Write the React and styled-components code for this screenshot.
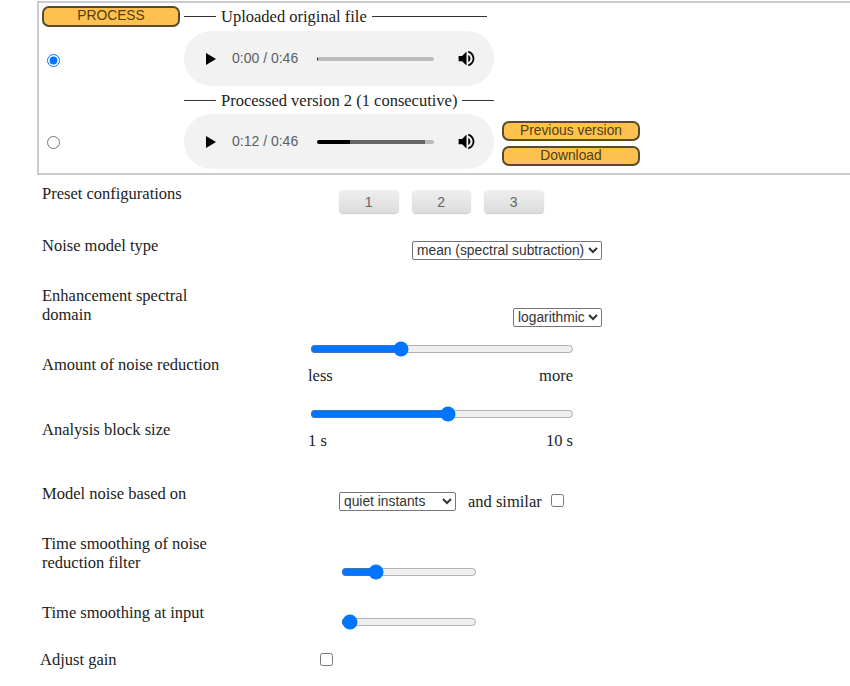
import React from 'react';
import styled, { createGlobalStyle } from 'styled-components';

const Global = createGlobalStyle`
    html, body {
        margin: 0;
        padding: 0;
        background: #fff;
        overflow: hidden;
    }
    body {
        font-family: "Liberation Serif", "Times New Roman", serif;
        font-size: 16.5px;
        line-height: 19px;
        color: #222;
    }
`;

const Page = styled.div`
    width: 850px;
    height: 686px;
    padding-top: 1px;
    box-sizing: border-box;
    overflow: hidden;
`;

const Panel = styled.div`
    width: 830px;
    height: 174px;
    margin-left: 37px;
    border: 2px solid #ccc;
    box-sizing: border-box;
    padding-top: 3px;
`;

const TrackGrid = styled.div`
    display: grid;
    grid-template-columns: 145px 310px 1fr;
    grid-template-rows: 21px 4px 55px 14px 14px 55px;
`;

const OrangeButton = styled.button`
    display: block;
    box-sizing: border-box;
    padding: 0 0 2px;
    width: ${(p) => p.$width}px;
    height: ${(p) => p.$height}px;
    background: #fec14f;
    border: 2px solid #594a2b;
    border-radius: 7px;
    font-family: "Liberation Sans", Arial, sans-serif;
    font-size: 13.8px;
    line-height: 16px;
    color: #4f3f14;
`;

const ProcessCell = styled.div`
    grid-column: 1;
    grid-row: 1;
    padding-left: 3px;
`;

const Legend = styled.div`
    grid-column: 2 / 4;
    grid-row: ${(p) => p.$row};
    display: flex;
    align-items: center;
    gap: 5px;
    height: 19px;
    white-space: nowrap;
    margin-top: ${(p) => p.$top}px;
    &::before {
        content: "";
        width: 32px;
        height: 1px;
        background: #333;
    }
    &::after {
        content: "";
        width: ${(p) => p.$tail}px;
        height: 1px;
        background: #333;
    }
`;

const RadioCell = styled.div`
    grid-column: 1;
    grid-row: ${(p) => p.$row};
    display: flex;
    align-items: center;
    padding-left: 8px;
    padding-top: ${(p) => p.$top}px;
`;

const Radio = styled.input`
    margin: 0;
    width: 13px;
    height: 13px;
    accent-color: #0075ff;
`;

const Player = styled.div`
    grid-column: 2;
    grid-row: ${(p) => p.$row};
    display: flex;
    align-items: center;
    height: 55px;
    background: #f2f2f2;
    border-radius: 28px;
    font-family: "Liberation Sans", Arial, sans-serif;
    font-size: 14px;
    color: #5d5e5f;
`;

const PlayIcon = styled.svg`
    width: 10px;
    height: 12px;
    margin-left: 22px;
    margin-right: 16px;
    flex: none;
`;

const Time = styled.span`
    width: 69px;
    flex: none;
    white-space: nowrap;
`;

const Track = styled.div`
    width: 117px;
    height: 4px;
    margin-left: 16px;
    margin-right: 22px;
    border-radius: 2px;
    flex: none;
    background: linear-gradient(
        to right,
        #000 0,
        #000 ${(p) => p.$played}px,
        ${(p) => (p.$buffered ? '#666' : '#bbb')} ${(p) => p.$played}px,
        ${(p) => (p.$buffered ? '#666' : '#bbb')} ${(p) => p.$buffered}px,
        #bbb ${(p) => p.$buffered}px,
        #bbb 100%
    );
`;

const VolumeIcon = styled.svg`
    width: 21px;
    height: 21px;
    flex: none;
`;

const SideButtons = styled.div`
    grid-column: 3;
    grid-row: 6;
    display: flex;
    flex-direction: column;
    gap: 5px;
    padding-left: 8px;
    padding-top: 7px;
`;

const Form = styled.div`
    padding-top: 9px;
`;

const Row = styled.div`
    display: grid;
    grid-template-columns: ${(p) => 266 - (p.$indent || 0)}px 1fr;
    height: ${(p) => p.$height}px;
    margin-left: ${(p) => 42 + (p.$indent || 0)}px;
`;

const Label = styled.div`
    max-width: 185px;
    padding-top: ${(p) => p.$top || 0}px;
`;

const Control = styled.div`
    display: flex;
    align-items: ${(p) => p.$align || 'flex-start'};
    flex-direction: ${(p) => p.$direction || 'row'};
    padding-left: ${(p) => p.$left || 0}px;
    padding-top: ${(p) => p.$top || 0}px;
`;

const PresetButtons = styled.div`
    display: flex;
    gap: 13px;
`;

const PresetButton = styled.button`
    width: 59.5px;
    height: 23px;
    padding: 0;
    border: 0;
    border-radius: 4px;
    background: linear-gradient(#efefef, #dcdcdc);
    box-shadow: 0 1px 1px #ccc;
    font-family: "Liberation Sans", Arial, sans-serif;
    font-size: 14px;
    color: #666;
`;

const Select = styled.select`
    box-sizing: border-box;
    height: 19px;
    padding: 0;
    width: ${(p) => (p.$width ? `${p.$width}px` : 'auto')};
    background: #fff;
    border: 1px solid #767676;
    border-radius: 2px;
    font-family: "Liberation Sans", Arial, sans-serif;
    font-size: 13.8px;
    color: #333;
`;

const Range = styled.input`
    display: block;
    width: ${(p) => p.$width}px;
    height: 16px;
    margin: 0 0 0 2px;
    accent-color: #0075ff;
`;

const ScaleLabels = styled.div`
    display: flex;
    justify-content: space-between;
    width: 265px;
    margin-top: 9px;
`;

const Inline = styled.span`
    margin-left: 12px;
    margin-right: 9px;
    line-height: 19px;
`;

const Check = styled.input`
    margin: ${(p) => p.$top || 0}px 0 0 0;
    width: 13px;
    height: 13px;
`;

const TrackPlayer = ({ row, time, played, buffered }) => (
    <Player $row={row}>
        <PlayIcon viewBox="0 0 10 12">
            <path d="M0 0 L10 6 L0 12 Z" fill="#000" />
        </PlayIcon>
        <Time>{time}</Time>
        <Track $played={played} $buffered={buffered} />
        <VolumeIcon viewBox="0 0 24 24">
            <path
                fill="#000"
                d="M3 9v6h4l5 5V4L7 9H3zm13.5 3c0-1.77-1.02-3.29-2.5-4.03v8.05c1.48-.73 2.5-2.25 2.5-4.02zM14 3.23v2.06c2.89.86 5 3.54 5 6.71s-2.11 5.85-5 6.71v2.06c4.01-.91 7-4.49 7-8.77s-2.99-7.86-7-8.77z"
            />
        </VolumeIcon>
    </Player>
);

const App = () => (
    <Page>
        <Global />
        <Panel>
            <TrackGrid>
                <ProcessCell>
                    <OrangeButton $width={138} $height={21}>PROCESS</OrangeButton>
                </ProcessCell>
                <Legend $row="1" $top={1} $tail={115}>Uploaded original file</Legend>
                <RadioCell $row="3" $top={3}>
                    <Radio type="radio" name="version" defaultChecked />
                </RadioCell>
                <TrackPlayer row="3" time="0:00 / 0:46" played={1} buffered={0} />
                <Legend $row="4 / 6" $top={5} $tail={32}>Processed version 2 (1 consecutive)</Legend>
                <RadioCell $row="6" $top={2}>
                    <Radio type="radio" name="version" />
                </RadioCell>
                <TrackPlayer row="6" time="0:12 / 0:46" played={33} buffered={108} />
                <SideButtons>
                    <OrangeButton $width={138} $height={20}>Previous version</OrangeButton>
                    <OrangeButton $width={138} $height={20}>Download</OrangeButton>
                </SideButtons>
            </TrackGrid>
        </Panel>
        <Form>
            <Row $height={52}>
                <Label>Preset configurations</Label>
                <Control $left={31} $top={6}>
                    <PresetButtons>
                        <PresetButton>1</PresetButton>
                        <PresetButton>2</PresetButton>
                        <PresetButton>3</PresetButton>
                    </PresetButtons>
                </Control>
            </Row>
            <Row $height={50}>
                <Label>Noise model type</Label>
                <Control $left={104} $top={5}>
                    <Select defaultValue="mean">
                        <option value="mean">mean (spectral subtraction)</option>
                    </Select>
                </Control>
            </Row>
            <Row $height={55}>
                <Label>Enhancement spectral domain</Label>
                <Control $left={205} $top={22}>
                    <Select defaultValue="log">
                        <option value="log">logarithmic</option>
                    </Select>
                </Control>
            </Row>
            <Row $height={65}>
                <Label $top={14}>Amount of noise reduction</Label>
                <Control $direction="column" $align="flex-start">
                    <Range type="range" $width={264} min="0" max="100" defaultValue="33.5" step="0.5" />
                    <ScaleLabels>
                        <span>less</span>
                        <span>more</span>
                    </ScaleLabels>
                </Control>
            </Row>
            <Row $height={78}>
                <Label $top={14}>Analysis block size</Label>
                <Control $direction="column" $align="flex-start">
                    <Range type="range" $width={264} min="0" max="100" defaultValue="52.5" step="0.5" />
                    <ScaleLabels>
                        <span>1 s</span>
                        <span>10 s</span>
                    </ScaleLabels>
                </Control>
            </Row>
            <Row $height={50}>
                <Label>Model noise based on</Label>
                <Control $left={31} $top={8}>
                    <Select $width={117} defaultValue="quiet">
                        <option value="quiet">quiet instants</option>
                    </Select>
                    <Inline>and similar</Inline>
                    <Check type="checkbox" $top={2} />
                </Control>
            </Row>
            <Row $height={69}>
                <Label>Time smoothing of noise reduction filter</Label>
                <Control $left={31} $top={30}>
                    <Range type="range" $width={136} min="0" max="100" defaultValue="22.5" step="0.5" />
                </Control>
            </Row>
            <Row $height={47}>
                <Label>Time smoothing at input</Label>
                <Control $left={31} $top={11}>
                    <Range type="range" $width={136} min="0" max="100" defaultValue="1" />
                </Control>
            </Row>
            <Row $height={30} $indent={-2}>
                <Label>Adjust gain</Label>
                <Control $left={12}>
                    <Check type="checkbox" $top={3} />
                </Control>
            </Row>
        </Form>
    </Page>
);

export default App;
